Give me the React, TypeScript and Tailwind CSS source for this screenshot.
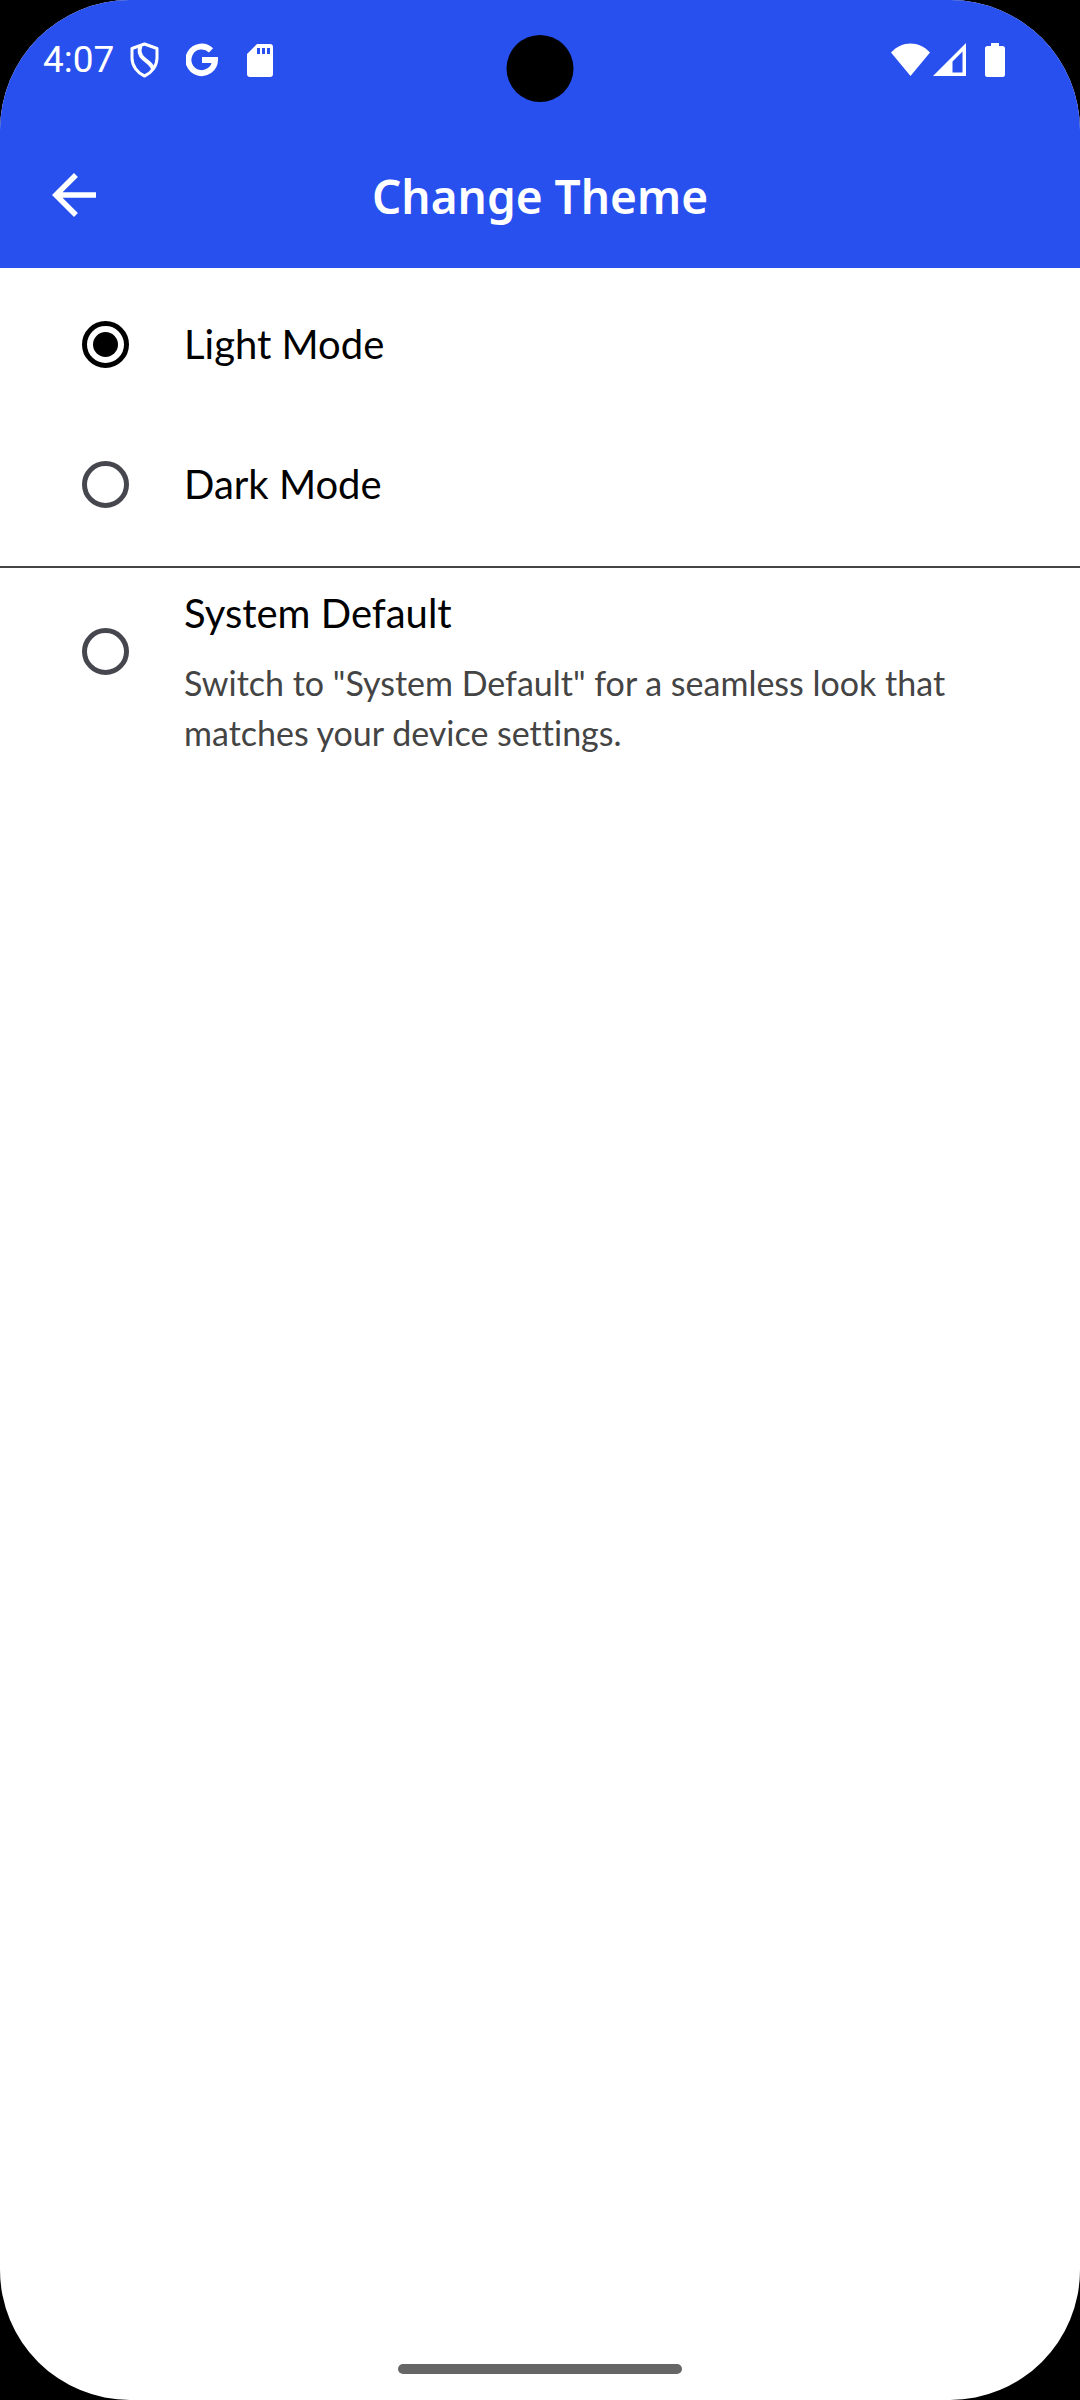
import { useState } from "react";

type Theme = "light" | "dark" | "system";

const OPTIONS: { id: Theme; label: string; hint?: string }[] = [
  { id: "light", label: "Light Mode" },
  { id: "dark", label: "Dark Mode" },
  {
    id: "system",
    label: "System Default",
    hint: 'Switch to "System Default" for a seamless look that matches your device settings.',
  },
];

function StatusBar() {
  return (
    <div className="relative flex h-[120px] items-center justify-between pl-[43px] pr-[75px]">
      <div className="flex items-center">
        <span className="w-[87px] font-[Roboto,sans-serif] text-[37px] leading-[46px]">4:07</span>
        <svg className="mr-[27px] h-[36px] w-[29px]" viewBox="0 0 29 36" fill="none" stroke="currentColor" strokeWidth="3" strokeLinejoin="round" aria-hidden="true">
          <path d="M14.500 2L27 6.500V16C27 24 21.500 31 14.500 34C7.500 31 2 24 2 16V6.500Z" />
          <path strokeWidth="4" d="M10.500 4C8.500 9 9.500 13 13.500 16.500C18 20.500 22 22 23 27" />
        </svg>
        <svg className="mr-[29px] h-[34px] w-[32px]" viewBox="0 0 32 34" fill="none" stroke="currentColor" strokeWidth="6" aria-hidden="true">
          <path d="M25 7.300A13.300 13.300 0 1 0 29 17H16" />
        </svg>
        <svg className="h-[34px] w-[26px]" viewBox="0 0 26 34" fill="currentColor" aria-hidden="true">
          <path fillRule="evenodd" d="M10 1H23A3 3 0 0 1 26 4V31A3 3 0 0 1 23 34H3A3 3 0 0 1 0 31V11ZM10 5V11H13V5ZM15 5V11H18V5ZM20 5V11H23V5Z" />
        </svg>
      </div>
      <span className="absolute left-1/2 top-[35px] size-[67px] -translate-x-1/2 rounded-full bg-black" />
      <div className="flex items-center">
        <svg className="mr-[3px] h-[34px] w-[39px]" viewBox="0 0 39 34" fill="currentColor" aria-hidden="true">
          <path d="M0 9.500C11 -2.500 28 -2.500 39 9.500L19.500 33Z" />
        </svg>
        <svg className="mr-[19px] h-[34px] w-[33px]" viewBox="0 0 33 34" fill="currentColor" aria-hidden="true">
          <path fillRule="evenodd" d="M33 0V33H0ZM29.500 8.500L19.500 18.500V29.500H29.500Z" />
        </svg>
        <svg className="h-[34px] w-[20px]" viewBox="0 0 20 34" fill="currentColor" aria-hidden="true">
          <path d="M6 0H14V3H17.500A2.500 2.500 0 0 1 20 5.500V31.500A2.500 2.500 0 0 1 17.500 34H2.500A2.500 2.500 0 0 1 0 31.500V5.500A2.500 2.500 0 0 1 2.500 3H6Z" />
        </svg>
      </div>
    </div>
  );
}

export default function App() {
  const [theme, setTheme] = useState<Theme>("light");

  return (
    <div className="min-h-screen bg-black font-[Lato,sans-serif] [font-variant-ligatures:none]">
      <div className="flex min-h-screen flex-col overflow-hidden rounded-[130px] bg-white">
        <header className="bg-[#2750ee] text-white">
          <StatusBar />
          <div className="grid h-[148px] grid-cols-[66px_1fr_66px] items-start px-[41px] pt-[42px]">
            <button type="button" aria-label="Back" className="size-[66px]">
              <svg className="size-[66px]" viewBox="0 0 24 24" fill="currentColor" aria-hidden="true">
                <path d="M20 11H7.830l5.590-5.590L12 4l-8 8 8 8 1.410-1.410L7.830 13H20v-2z" />
              </svg>
            </button>
            <h1 className="text-center font-['Noto_Sans',sans-serif] text-[46px] font-semibold leading-[68px]">
              Change Theme
            </h1>
          </div>
        </header>

        <main className="flex-1 pt-[6px]">
          <div role="radiogroup" aria-label="Theme">
            {OPTIONS.map(({ id, label, hint }) => (
              <div
                key={id}
                className={
                  hint
                    ? "mt-[12px] flex items-start border-t-2 border-[#444444] px-[82px] pt-[20px]"
                    : "flex h-[140px] items-center px-[82px]"
                }
              >
                <div className={hint ? "mr-[55px] pt-[40px]" : "mr-[55px]"}>
                  <input
                    type="radio"
                    name="theme"
                    id={id}
                    checked={theme === id}
                    onChange={() => setTheme(id)}
                    aria-describedby={hint ? "system-hint" : undefined}
                    className="grid size-[47px] cursor-pointer appearance-none place-items-center rounded-full border-[5px] border-[#46464f] checked:border-black checked:before:size-[25px] checked:before:rounded-full checked:before:bg-black checked:before:content-['']"
                  />
                </div>
                <div>
                  <label htmlFor={id} className="block cursor-pointer text-[40px] leading-[50px] text-black">
                    {label}
                  </label>
                  {hint && (
                    <p id="system-hint" className="mt-[20px] text-[34px] leading-[50px] text-[#444444]">
                      {hint}
                    </p>
                  )}
                </div>
              </div>
            ))}
          </div>
        </main>

        <div className="flex justify-center pb-[26px]">
          <span className="h-[10px] w-[284px] rounded-full bg-[#666666]" />
        </div>
      </div>
    </div>
  );
}
